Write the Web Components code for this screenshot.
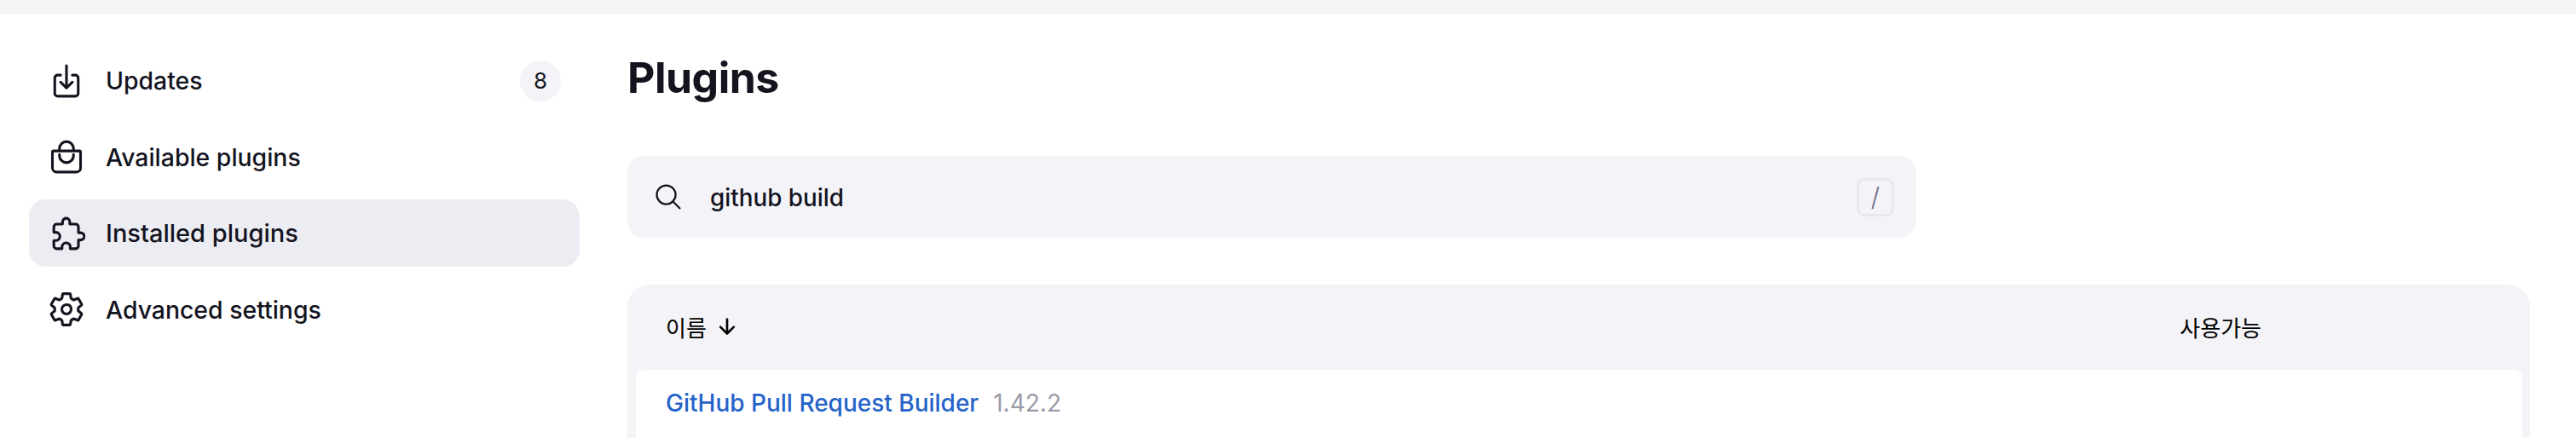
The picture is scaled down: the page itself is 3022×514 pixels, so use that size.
<!DOCTYPE html>
<html lang="ko"><head><meta charset="utf-8"><title>Plugins</title>
<style>
html,body{margin:0;height:514px;overflow:hidden;background:#fff}
body{font-family:Inter,"Noto Sans CJK KR",sans-serif;color:#14141f}
</style></head><body>
<app-page>
  <side-nav slot="nav">
    <nav-item icon="download" badge="8">Updates</nav-item>
    <nav-item icon="bag">Available plugins</nav-item>
    <nav-item icon="puzzle" active>Installed plugins</nav-item>
    <nav-item icon="gear">Advanced settings</nav-item>
  </side-nav>
  <plugin-main slot="main">
    <search-bar value="github build"></search-bar>
    <plugin-table>
      <plugin-row name="GitHub Pull Request Builder" version="1.42.2"></plugin-row>
    </plugin-table>
  </plugin-main>
</app-page>
<script>
const ICONS={
download:'<path d="M336 176h40a40 40 0 0140 40v208a40 40 0 01-40 40H136a40 40 0 01-40-40V216a40 40 0 0140-40h40"/><path d="M176 272l80 80 80-80M256 48v288"/>',
bag:'<path d="M80 176a16 16 0 00-16 16v216c0 30.24 25.76 56 56 56h272c30.24 0 56-24.51 56-54.75V192a16 16 0 00-16-16zM160 176v-32a96 96 0 0196-96h0a96 96 0 0196 96v32"/><path d="M160 224v16a96 96 0 0096 96h0a96 96 0 0096-96v-16"/>',
puzzle:'<path transform="translate(35 0)" d="M413.66 246.1H386a2 2 0 01-2-2v-77.24A38.86 38.86 0 00345.14 128H267.9a2 2 0 01-2-2V98.34c0-27.14-21.5-49.86-48.64-50.33a49.53 49.53 0 00-50.4 49.51V126a2 2 0 01-2 2H87.62A39.74 39.74 0 0048 167.62V238a2 2 0 002 2h26.91c29.37 0 53.68 25.48 54.09 54.85.42 29.87-23.51 57.15-53.29 57.15H50a2 2 0 00-2 2v70.38A39.74 39.74 0 0087.62 464H158a2 2 0 002-2v-20.93c0-30.28 24.75-56.35 55-57.06 30.1-.7 57 20.31 57 50.28V462a2 2 0 002 2h71.14A38.86 38.86 0 00384 425.14v-78a2 2 0 012-2h28.48c27.63 0 49.52-22.67 49.52-50.4s-23.2-48.64-50.34-48.64z"/>',
gear:'<path d="M262.29 192.31a64 64 0 1057.4 57.4 64.13 64.13 0 00-57.4-57.4zM416.39 256a154.34 154.34 0 01-1.53 20.79l45.21 35.46a10.81 10.81 0 012.45 13.75l-42.77 74a10.81 10.81 0 01-13.14 4.59l-44.9-18.08a16.11 16.11 0 00-15.17 1.75A164.48 164.48 0 01325 400.8a15.94 15.94 0 00-8.82 12.14l-6.73 47.89a11.08 11.08 0 01-10.68 9.17h-85.54a11.11 11.11 0 01-10.69-8.87l-6.72-47.82a16.07 16.07 0 00-9-12.22 155.3 155.3 0 01-21.46-12.57 16 16 0 00-15.11-1.71l-44.89 18.07a10.81 10.81 0 01-13.14-4.58l-42.77-74a10.8 10.8 0 012.45-13.75l38.21-30a16.05 16.05 0 006-14.08c-.36-4.17-.58-8.33-.58-12.5s.21-8.27.58-12.35a16 16 0 00-6.07-13.94l-38.19-30A10.81 10.81 0 0149.48 186l42.77-74a10.81 10.81 0 0113.14-4.59l44.9 18.08a16.11 16.11 0 0015.17-1.75A164.48 164.48 0 01187 111.2a15.94 15.94 0 008.82-12.14l6.73-47.89A11.08 11.08 0 01213.23 42h85.54a11.11 11.11 0 0110.69 8.87l6.72 47.82a16.07 16.07 0 009 12.22 155.3 155.3 0 0121.46 12.57 16 16 0 0015.11 1.71l44.89-18.07a10.81 10.81 0 0113.14 4.58l42.77 74a10.8 10.8 0 01-2.45 13.75l-38.21 30a16.05 16.05 0 00-6.07 14.08c.33 4.14.55 8.3.55 12.47z"/>',
search:'<path stroke-linecap="butt" d="M221.09 64a157.09 157.09 0 10157.09 157.09A157.1 157.1 0 00221.09 64z"/><path d="M338.29 338.29L448 448"/>',
arrow:'<path stroke-width="48" d="M112 268l144 144 144-144M256 392V100"/>'
};
const svg=(n,s,w=32)=>`<svg width="${s}" height="${s}" viewBox="0 0 512 512" fill="none" stroke="currentColor" stroke-width="${w}" stroke-linecap="round" stroke-linejoin="round" aria-hidden="true">${ICONS[n]}</svg>`;
class Base extends HTMLElement{
  constructor(){super();this.attachShadow({mode:'open'})}
  connectedCallback(){this.shadowRoot.innerHTML=this.html()}
}
customElements.define('app-page',class extends Base{html(){return `<style>
:host{display:block}
.top{height:17px;background:#f5f5f8}
.wrap{display:grid;grid-template-columns:646px 1fr;column-gap:56px;padding:38px 54px 0 34px}
</style><div class="top"></div><div class="wrap"><slot name="nav"></slot><slot name="main"></slot></div>`}});
customElements.define('side-nav',class extends Base{html(){return `<style>
:host{display:flex;flex-direction:column;gap:10.2px}
</style><slot></slot>`}});
customElements.define('nav-item',class extends Base{html(){
  const a=this.hasAttribute('active'),b=this.getAttribute('badge');
  return `<style>
:host{display:flex;align-items:center;height:79.3px;padding:0 22px;gap:24px;border-radius:20px;font-size:${a?29:28.4}px;font-weight:${a?500:450};background:${a?'#ecedf3':'transparent'}}
svg{flex:none;display:block}
.t{flex:1}
.b{flex:none;width:48px;height:48px;border-radius:50%;background:#f3f3f8;display:flex;align-items:center;justify-content:center;font-size:26px;font-weight:400}
</style>${svg(this.getAttribute('icon'),44,36)}<span class="t"><slot></slot></span>${b?`<span class="b">${b}</span>`:''}`}});
customElements.define('plugin-main',class extends Base{html(){return `<style>
:host{display:block}
h1{margin:0;font-size:50px;line-height:60px;font-weight:700;height:122px;margin-top:6px;color:#14141f;letter-spacing:-.5px}
</style><h1>Plugins</h1><slot></slot>`}});
customElements.define('search-bar',class extends Base{html(){return `<style>
:host{display:flex;align-items:center;box-sizing:border-box;width:1512px;height:96px;padding:0 26px 0 30px;background:#f3f3f8;border-radius:20px;margin-bottom:55px;font-size:27.8px;font-weight:450}
svg{flex:none;display:block}
.v{flex:1;margin-left:31px;padding-top:2px}
.k{flex:none;box-sizing:border-box;width:44px;height:45px;border:3px solid #e8e8ef;border-radius:9px;display:flex;align-items:center;justify-content:center;font-size:30px;font-weight:300;color:#6c6c85}
</style>${svg('search',36)}<span class="v">${this.getAttribute('value')}</span><span class="k">/</span>`}});
customElements.define('plugin-table',class extends Base{html(){return `<style>
:host{display:block;background:#f3f3f8;border-radius:26px;padding:0 9px 0 10px;height:300px}
.h{display:flex;align-items:center;box-sizing:border-box;height:100px;padding-bottom:2px;font-size:26px;font-weight:400;color:#000}
.n{display:flex;align-items:center;gap:10px;margin-left:35px}
.u{margin-left:auto;margin-right:306px}
.body{background:#fff;border-radius:9px 9px 0 0;height:200px}
</style><div class="h"><span class="n">이름 ${svg('arrow',28)}</span><span class="u">사용가능</span></div><div class="body"><slot></slot></div>`}});
customElements.define('plugin-row',class extends Base{html(){return `<style>
:host{display:flex;align-items:baseline;padding:19px 35px 0;font-size:28px;line-height:40px}
a{color:#2563c9;font-weight:500;text-decoration:none}
span{margin-left:17px;color:#9a9aa8;font-weight:400}
</style><a href="#">${this.getAttribute('name')}</a><span>${this.getAttribute('version')}</span>`}});
</script>
</body></html>
